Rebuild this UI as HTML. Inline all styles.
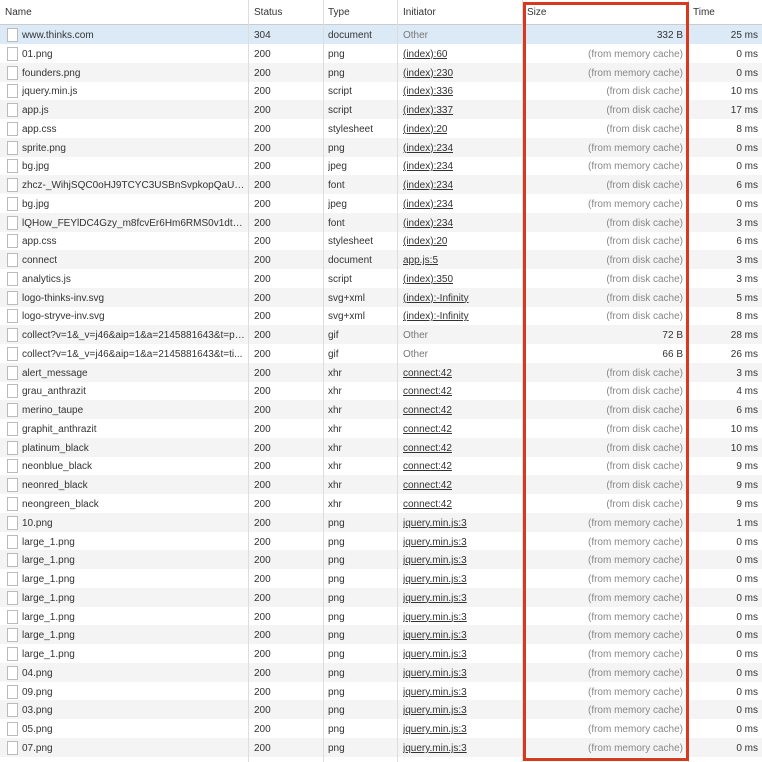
<!DOCTYPE html>
<html><head><style>
body{margin:0;width:762px;height:762px;overflow:hidden;background:#fff;font-family:"Liberation Sans",sans-serif;font-size:10px;color:#333;position:relative}
.r{position:absolute;left:0;width:762px;height:19px;line-height:22px}
.r.g{background:#f4f4f4}
.r.sel{background:#dceaf8}
.c{position:absolute;top:0;white-space:nowrap;overflow:hidden}
.n{left:22px;width:224px;text-overflow:ellipsis}
.s{left:254px}
.t{left:328px}
.i{left:403px;text-decoration:underline}
.i.o{text-decoration:none;color:#777}
.z{left:523px;width:160px;text-align:right;color:#888}
.z.d{color:#333}
.m{left:690px;width:68px;text-align:right}
.ic{position:absolute;left:7px;top:3px;width:9px;height:12px;border:1px solid #bbb;background:#fff}
.v{position:absolute;top:0;height:762px;width:1px;background:#ddd}
.h{position:absolute;top:0;left:0;width:762px;height:24px;line-height:26px;border-bottom:1px solid #ccc;background:#fff}
#box{position:absolute;left:523px;top:2px;width:160px;height:753px;border:3px solid #d6391e}
</style></head><body>
<div class="h"><span class="c" style="left:5px">Name</span><span class="c" style="left:254px">Status</span><span class="c" style="left:328px">Type</span><span class="c" style="left:403px">Initiator</span><span class="c" style="left:527px">Size</span><span class="c" style="left:693px">Time</span></div>
<div id="rows"></div>
<div class="v" style="left:248px"></div><div class="v" style="left:323px"></div><div class="v" style="left:397px"></div><div class="v" style="left:522px"></div><div class="v" style="left:688px"></div>
<div id="box"></div>
<script>
var M="(from memory cache)",D="(from disk cache)";
var d=[
["www.thinks.com","304","document","Other","332 B","25 ms"],
["01.png","200","png","(index):60",M,"0 ms"],
["founders.png","200","png","(index):230",M,"0 ms"],
["jquery.min.js","200","script","(index):336",D,"10 ms"],
["app.js","200","script","(index):337",D,"17 ms"],
["app.css","200","stylesheet","(index):20",D,"8 ms"],
["sprite.png","200","png","(index):234",M,"0 ms"],
["bg.jpg","200","jpeg","(index):234",M,"0 ms"],
["zhcz-_WihjSQC0oHJ9TCYC3USBnSvpkopQaUR-...","200","font","(index):234",D,"6 ms"],
["bg.jpg","200","jpeg","(index):234",M,"0 ms"],
["lQHow_FEYlDC4Gzy_m8fcvEr6Hm6RMS0v1dtXs...","200","font","(index):234",D,"3 ms"],
["app.css","200","stylesheet","(index):20",D,"6 ms"],
["connect","200","document","app.js:5",D,"3 ms"],
["analytics.js","200","script","(index):350",D,"3 ms"],
["logo-thinks-inv.svg","200","svg+xml","(index):-Infinity",D,"5 ms"],
["logo-stryve-inv.svg","200","svg+xml","(index):-Infinity",D,"8 ms"],
["collect?v=1&_v=j46&aip=1&a=2145881643&t=pa...","200","gif","Other","72 B","28 ms"],
["collect?v=1&_v=j46&aip=1&a=2145881643&t=ti...","200","gif","Other","66 B","26 ms"],
["alert_message","200","xhr","connect:42",D,"3 ms"],
["grau_anthrazit","200","xhr","connect:42",D,"4 ms"],
["merino_taupe","200","xhr","connect:42",D,"6 ms"],
["graphit_anthrazit","200","xhr","connect:42",D,"10 ms"],
["platinum_black","200","xhr","connect:42",D,"10 ms"],
["neonblue_black","200","xhr","connect:42",D,"9 ms"],
["neonred_black","200","xhr","connect:42",D,"9 ms"],
["neongreen_black","200","xhr","connect:42",D,"9 ms"],
["10.png","200","png","jquery.min.js:3",M,"1 ms"],
["large_1.png","200","png","jquery.min.js:3",M,"0 ms"],
["large_1.png","200","png","jquery.min.js:3",M,"0 ms"],
["large_1.png","200","png","jquery.min.js:3",M,"0 ms"],
["large_1.png","200","png","jquery.min.js:3",M,"0 ms"],
["large_1.png","200","png","jquery.min.js:3",M,"0 ms"],
["large_1.png","200","png","jquery.min.js:3",M,"0 ms"],
["large_1.png","200","png","jquery.min.js:3",M,"0 ms"],
["04.png","200","png","jquery.min.js:3",M,"0 ms"],
["09.png","200","png","jquery.min.js:3",M,"0 ms"],
["03.png","200","png","jquery.min.js:3",M,"0 ms"],
["05.png","200","png","jquery.min.js:3",M,"0 ms"],
["07.png","200","png","jquery.min.js:3",M,"0 ms"]];
var h="";
d.forEach(function(r,k){
var cls=k==0?"r sel":(k%2==0?"r g":"r");
var top=(25+k*18.76).toFixed(2);
var io=r[3]=="Other"?" o":"";
var zd=r[4].indexOf("from")<0?" d":"";
h+='<div class="'+cls+'" style="top:'+top+'px"><span class="ic"></span><span class="c n">'+r[0].replace(/&/g,"&amp;")+'</span><span class="c s">'+r[1]+'</span><span class="c t">'+r[2]+'</span><span class="c i'+io+'">'+r[3]+'</span><span class="c z'+zd+'">'+r[4]+'</span><span class="c m">'+r[5]+'</span></div>';
});
document.getElementById("rows").innerHTML=h;
</script>
</body></html>
